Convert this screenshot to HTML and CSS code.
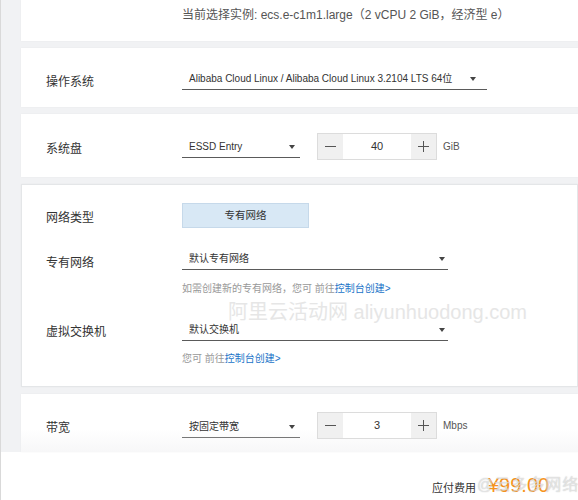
FILE: index.html
```html
<!DOCTYPE html>
<html lang="zh-CN">
<head>
<meta charset="utf-8">
<title>ECS 配置</title>
<link rel="stylesheet" href="styles.css">
</head>
<body>
<div class="screen">
  <div class="panel">
    <section class="card card-inst">
      <div class="row">
        <div class="label"></div>
        <div class="inst">当前选择实例: ecs.e-c1m1.large（2 vCPU 2 GiB，经济型 e）</div>
      </div>
    </section>

    <section class="card card-os">
      <div class="row">
        <div class="label lab-os">操作系统</div>
        <div class="select sel-os"><span>Alibaba Cloud Linux / Alibaba Cloud Linux 3.2104 LTS 64位</span><i class="caret"></i></div>
      </div>
    </section>

    <section class="card card-disk">
      <div class="row">
        <div class="label lab-disk">系统盘</div>
        <div class="select sel-short sel-disk"><span>ESSD Entry</span><i class="caret"></i></div>
        <div class="stepper">
          <div class="step-btn"><i class="minus"></i></div>
          <div class="step-val">40</div>
          <div class="step-btn"><i class="plus"></i></div>
        </div>
        <div class="unit">GiB</div>
      </div>
    </section>

    <section class="card card-net">
      <div class="row">
        <div class="label lab-nettype">网络类型</div>
        <div class="seg-btn">专有网络</div>
      </div>
      <div class="row row-vpc">
        <div class="label lab-vpc">专有网络</div>
        <div class="field">
          <div class="select sel-long"><span>默认专有网络</span><i class="caret"></i></div>
          <div class="help help-vpc">如需创建新的专有网络，您可 前往<a class="link">控制台创建&gt;</a></div>
        </div>
      </div>
      <div class="row row-vsw">
        <div class="label lab-vsw">虚拟交换机</div>
        <div class="field">
          <div class="select sel-long"><span>默认交换机</span><i class="caret"></i></div>
          <div class="help help-vsw">您可 前往<a class="link">控制台创建&gt;</a></div>
        </div>
      </div>
      <div class="watermark">阿里云活动网 aliyunhuodong.com</div>
    </section>

    <section class="card card-bw">
      <div class="row">
        <div class="label lab-bw">带宽</div>
        <div class="select sel-short sel-bw"><span>按固定带宽</span><i class="caret"></i></div>
        <div class="stepper">
          <div class="step-btn"><i class="minus"></i></div>
          <div class="step-val">3</div>
          <div class="step-btn"><i class="plus"></i></div>
        </div>
        <div class="unit">Mbps</div>
      </div>
    </section>
  </div>

  <div class="footer">
    <span class="fee-label">应付费用</span>
    <span class="price">¥99.00</span>
    <span class="wm2">@云多多网络</span>
  </div>
</div>
</body>
</html>
```

FILE: styles.css
```css
html, body {
  margin: 0;
  padding: 0;
  background: #ffffff;
}

body {
  font-family: "Liberation Sans", "Noto Sans CJK SC", sans-serif;
  color: #333333;
  width: 578px;
  height: 500px;
  overflow: hidden;
}

.screen {
  width: 578px;
  height: 500px;
  border-left: 1px solid #d9d9d9;
  box-sizing: border-box;
  position: relative;
}

.panel {
  background: #f1f2f4;
  padding-left: 20px;
  display: flex;
  flex-direction: column;
  gap: 7px;
  height: 452px;
  box-sizing: border-box;
}

.card {
  background: #ffffff;
  box-sizing: border-box;
  padding-left: 25px;
  box-shadow: 0 0 2px rgba(0, 0, 0, 0.04);
}

.card-inst { height: 41px; padding-top: 7px; }
.card-os { height: 59px; padding-top: 20px; }
.card-disk { height: 63px; padding-top: 19px; }
.card-net {
  height: 203px;
  padding-top: 18px;
  border: 1px solid #e4e6e8;
  padding-left: 24px;
  position: relative;
}
.card-bw {
  height: 58px;
  padding-top: 18px;
  background: linear-gradient(#ffffff 60%, #f7f7f8);
}

.row {
  display: flex;
  align-items: flex-start;
}

.label {
  width: 136px;
  flex: none;
  font-size: 12px;
  line-height: 16px;
  color: #333333;
}

.lab-os { padding-top: 6px; }
.lab-disk { padding-top: 8px; }
.lab-nettype { padding-top: 7px; }
.lab-vpc { padding-top: 7px; }
.lab-vsw { padding-top: 5px; }
.lab-bw { padding-top: 8px; }

.inst {
  font-size: 12px;
  line-height: 16px;
  color: #555555;
}

.select {
  display: flex;
  align-items: center;
  justify-content: space-between;
  height: 21px;
  line-height: 21px;
  font-size: 10px;
  color: #333333;
  border-bottom: 1px solid #5a5a5a;
  padding-left: 7px;
  box-sizing: content-box;
}

.sel-os { width: 287px; padding-right: 11px; }
.sel-short { width: 106px; padding-right: 5px; margin-right: 17px; }
.sel-disk { margin-top: 3px; }
.sel-bw { margin-top: 4px; border-bottom-color: #777777; }
.sel-long { width: 256px; padding-right: 3px; }

.caret {
  width: 0;
  height: 0;
  border-left: 3.5px solid transparent;
  border-right: 3.5px solid transparent;
  border-top: 4px solid #444444;
}

.stepper {
  display: flex;
  height: 27px;
  border: 1px solid #dcdcdc;
  box-sizing: border-box;
  width: 120px;
}

.step-btn {
  width: 25px;
  background: #f0f0f0;
  display: flex;
  align-items: center;
  justify-content: center;
  position: relative;
}

.step-val {
  flex: 1;
  background: #ffffff;
  font-size: 11px;
  line-height: 25px;
  text-align: center;
  color: #333333;
}

.minus, .plus {
  display: block;
  width: 11px;
  height: 1.5px;
  background: #555555;
  position: relative;
}

.plus::after {
  content: "";
  position: absolute;
  left: 4.75px;
  top: -4.75px;
  width: 1.5px;
  height: 11px;
  background: #555555;
}

.unit {
  font-size: 10px;
  line-height: 27px;
  color: #555555;
  margin-left: 6px;
}

.seg-btn {
  width: 127px;
  height: 25px;
  line-height: 23px;
  box-sizing: border-box;
  background: #d8e8f5;
  border: 1px solid #c6d9ea;
  text-align: center;
  font-size: 10.5px;
  color: #333333;
}

.row-vpc { margin-top: 20px; }
.row-vsw { margin-top: 23px; }

.field {
  display: flex;
  flex-direction: column;
}

.help {
  font-size: 10px;
  line-height: 14px;
  color: #999999;
  white-space: nowrap;
}

.help-vpc { margin-top: 12px; }
.help-vsw { margin-top: 11px; }

.link {
  color: #1a73c8;
}

.watermark {
  position: absolute;
  left: 206px;
  top: 113px;
  font-size: 20px;
  line-height: 28px;
  color: #e6e6e6;
  white-space: nowrap;
  pointer-events: none;
}

.footer {
  height: 48px;
  display: flex;
  align-items: baseline;
  padding-left: 431px;
  padding-top: 21px;
  box-sizing: border-box;
  position: relative;
  white-space: nowrap;
}

.fee-label {
  font-size: 11px;
  color: #333333;
  margin-right: 12px;
}

.price {
  font-size: 20px;
  line-height: 24px;
  color: #f7941d;
}

.wm2 {
  position: absolute;
  left: 476px;
  top: 23px;
  font-size: 16px;
  line-height: 20px;
  color: rgba(255, 255, 255, 0.55);
  text-shadow: 0 0 1px rgba(120, 120, 120, 0.55);
  letter-spacing: 1px;
}
```
